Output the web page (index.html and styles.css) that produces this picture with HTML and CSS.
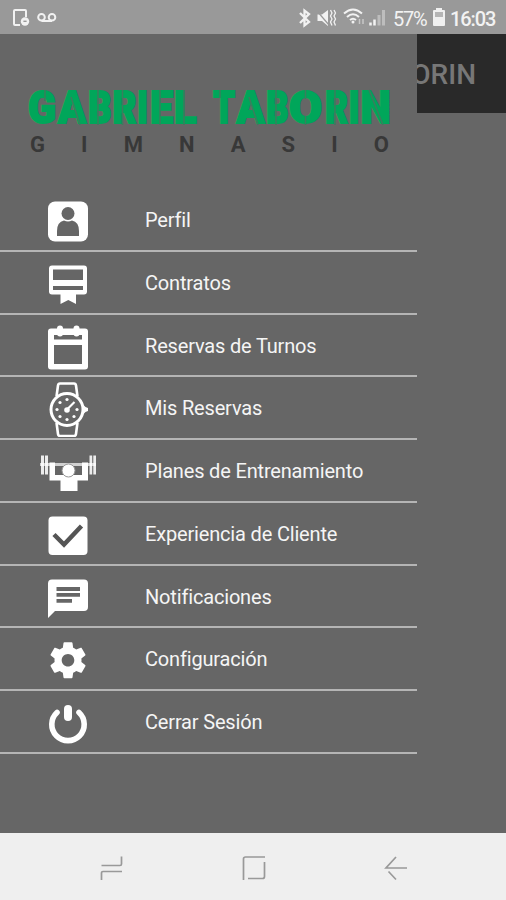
FILE: index.html
```html
<!DOCTYPE html>
<html lang="es">
<head>
    <meta charset="UTF-8">
    <meta name="viewport" content="width=device-width, initial-scale=1.0">
    <title>Gabriel Taborin Gimnasio</title>
    <link rel="stylesheet" href="styles.css">
</head>
<body>
    <header class="status-bar">
        <svg class="status-left" width="60" height="34" viewBox="0 0 60 34" fill="none" stroke="#f2f2f2" stroke-width="2">
            <path d="M20 25h-5a1 1 0 0 1-1-1V11a1 1 0 0 1 1-1h10a1 1 0 0 1 1 1v6"/>
            <circle cx="25" cy="21.5" r="4.2" fill="#f2f2f2" stroke="none"/>
            <path d="M23.4 21.3h3.2" stroke="#999" stroke-width="1.4"/>
            <circle cx="41.5" cy="17.3" r="3.300"/>
            <circle cx="52" cy="17.3" r="3.300"/>
            <path d="M41.5 21h10.5"/>
        </svg>
        <svg class="status-right" width="96" height="34" viewBox="294 0 96 34" fill="none" stroke="#f2f2f2" stroke-width="2">
            <path d="M300 13l9 9-4.500 3.500v-15l4.500 3.500-9 9" stroke-width="2.300"/>
            <path d="M317.500 14.500h4.500l6-4.500v16l-6-5h-4.500z" fill="#f2f2f2" stroke="none"/>
            <path d="M317 11l12 14" stroke="#999" stroke-width="1.200"/>
            <path d="M330.500 10l1.500 3-1.500 3 1.500 3-1.500 3 1.500 3.500M334 10l1.500 3-1.500 3 1.500 3-1.500 3 1.500 3.500" stroke-width="1.300"/>
            <path d="M344 13.500q9-8 18 0M347 17q6-5.500 12 0M350 20q3-2.500 6 0"/>
            <circle cx="353" cy="22" r="1.500" fill="#f2f2f2" stroke="none"/>
            <path d="M359.500 24v-5M363 19v5" stroke="#c8c8c8" stroke-width="1.500"/>
            <path d="M370.500 25.500v-3M374.500 25.500v-6" stroke-width="2.500"/>
            <path d="M379 25.500V15M383.500 25.500V10" stroke="#bdbdbd" stroke-width="3"/>
        </svg>
        <span class="battery-level">57%</span>
        <svg class="battery" width="12" height="34" viewBox="0 0 12 34">
            <path d="M3 8h6v2h2a1 1 0 0 1 1 1v14a1 1 0 0 1-1 1H1a1 1 0 0 1-1-1V11a1 1 0 0 1 1-1h2z" fill="#f0f0f0"/>
            <path d="M2 12h8v5H2z" fill="#b5b5b5"/>
        </svg>
        <span class="clock">16:03</span>
    </header>

    <main class="screen">
        <nav class="drawer">
            <div class="logo">
                <svg class="logo-name" width="417" height="50" viewBox="0 84 417 50">
                    <g class="logo-letters">
                        <text x="28" y="123" textLength="28" lengthAdjust="spacingAndGlyphs">G</text>
                        <text x="58" y="123" textLength="28" lengthAdjust="spacingAndGlyphs">A</text>
                        <text x="88" y="123" textLength="23.5" lengthAdjust="spacingAndGlyphs">B</text>
                        <text x="112.5" y="123" textLength="24" lengthAdjust="spacingAndGlyphs">R</text>
                        <text x="137" y="123" textLength="11" lengthAdjust="spacingAndGlyphs">I</text>
                        <text x="150" y="123" textLength="23" lengthAdjust="spacingAndGlyphs">E</text>
                        <text x="174" y="123" textLength="22.5" lengthAdjust="spacingAndGlyphs">L</text>
                        <text x="213" y="123" textLength="22" lengthAdjust="spacingAndGlyphs">T</text>
                        <text x="236.5" y="123" textLength="28" lengthAdjust="spacingAndGlyphs">A</text>
                        <text x="266" y="123" textLength="22.5" lengthAdjust="spacingAndGlyphs">B</text>
                        <text x="289" y="123" textLength="33" lengthAdjust="spacingAndGlyphs">O</text>
                        <text x="325" y="123" textLength="23" lengthAdjust="spacingAndGlyphs">R</text>
                        <text x="348.5" y="123" textLength="11" lengthAdjust="spacingAndGlyphs">I</text>
                        <text x="360.5" y="123" textLength="30" lengthAdjust="spacingAndGlyphs">N</text>
                    </g>
                    <!-- stencil cuts -->
                    <path class="logo-cuts" d="M45 90v11M71 97l9 28M98 90v35M122.500 90v35M160 90v35M184 90v35M220 98v-8M249 97l9 28M276 90v35M305.500 90v9M305.500 116v9M335 90v35M369 90l14 35"/>
                </svg>
                <div class="logo-sub">
                    <span>G</span><span>I</span><span>M</span><span>N</span><span>A</span><span>S</span><span>I</span><span>O</span>
                </div>
            </div>

            <ul class="menu">
                <li class="menu-item">
                    <svg class="icon" viewBox="0 0 60 60">
                        <rect x="10" y="12.500" width="40" height="40" rx="7"/>
                        <g class="hole">
                            <circle cx="30" cy="24.500" r="6.500"/>
                            <path d="M19 47v-5q0-9 7-10.500q4 2 8 0q7 1.500 7 10.500v5z"/>
                        </g>
                    </svg>
                    <span>Perfil</span>
                </li>
                <li class="menu-item">
                    <svg class="icon" viewBox="0 0 60 60">
                        <path fill-rule="evenodd" d="M14 13.500h32a3 3 0 0 1 3 3v23a3 3 0 0 1-3 3h-8v9.500l-7.700-4-7.800 4v-9.500H14a3 3 0 0 1-3-3v-23a3 3 0 0 1 3-3zM15 17.500v10.500h30V17.500zM15 34v4h30v-4z"/>
                    </svg>
                    <span>Contratos</span>
                </li>
                <li class="menu-item">
                    <svg class="icon" viewBox="0 0 60 60">
                        <path fill-rule="evenodd" d="M13 13.500h34a3 3 0 0 1 3 3v35a3 3 0 0 1-3 3H13a3 3 0 0 1-3-3v-35a3 3 0 0 1 3-3zM16 20v4.500h28V20zM16 30v19h28V30z"/>
                        <rect x="19" y="10.500" width="6" height="11" rx="3"/>
                        <rect x="35.500" y="10.500" width="6" height="11" rx="3"/>
                    </svg>
                    <span>Reservas de Turnos</span>
                </li>
                <li class="menu-item">
                    <svg class="icon" viewBox="0 0 60 60">
                        <g class="line">
                            <path d="M18.500 19.500l1.500-11q.3-2 2-2h14q1.700 0 2 2l1.500 11M18.500 45.500l1.500 11.500q.3 2 2 2h14q1.700 0 2-2l1.500-11.500" stroke-width="2.600"/>
                            <circle cx="29" cy="32.500" r="16" stroke-width="3"/>
                            <path d="M29 32.500l7.500-7.500" stroke-width="2.200"/>
                        </g>
                        <path d="M45 27.500l2.500 2.500 2.500 1v3l-2.500 1-2.500 2.500z"/>
                        <circle cx="29" cy="33" r="2.800"/>
                        <g>
                            <circle cx="29" cy="22.500" r="1.600"/>
                            <circle cx="22" cy="25.500" r="1.600"/>
                            <circle cx="19" cy="32.500" r="1.600"/>
                            <circle cx="22" cy="39.500" r="1.600"/>
                            <circle cx="29" cy="42.500" r="1.600"/>
                            <circle cx="36" cy="39.500" r="1.600"/>
                            <circle cx="39" cy="32.500" r="1.600"/>
                        </g>
                    </svg>
                    <span>Mis Reservas</span>
                </li>
                <li class="menu-item">
                    <svg class="icon" viewBox="0 0 60 60">
                        <path d="M3 15.500h3v19H3zM7 15.500h3v19H7zM51.500 15.500h2.700v19h-2.700zM55.300 15.500h2.700v19h-2.700z" opacity=".88"/>
                        <path d="M2 23h56v3H2z" opacity=".7"/>
                        <path d="M11.500 22.500H17V35h9q4.500 3 9 0h9V22.500h6V40.500H39.500V51H22.500V40.500h-11z"/>
                        <circle class="head" cx="30.500" cy="30.500" r="6.500"/>
                    </svg>
                    <span>Planes de Entrenamiento</span>
                </li>
                <li class="menu-item">
                    <svg class="icon" viewBox="0 0 60 60">
                        <rect x="10.500" y="13.500" width="39" height="38.500" rx="4"/>
                        <path class="cut" d="M16 31.500l10 10 17.500-18.500"/>
                    </svg>
                    <span>Experiencia de Cliente</span>
                </li>
                <li class="menu-item">
                    <svg class="icon" viewBox="0 0 60 60">
                        <path fill-rule="evenodd" d="M14 13.500h32a4 4 0 0 1 4 4V41a4 4 0 0 1-4 4H17l-7 7V17.500a4 4 0 0 1 4-4zM18.500 21v4h23.500v-4zM18.500 27v3.800h23.500V27zM18.500 33v3.800H34V33z"/>
                    </svg>
                    <span>Notificaciones</span>
                </li>
                <li class="menu-item">
                    <svg class="icon" viewBox="0 0 60 60">
                        <path transform="translate(8.400 10.700) scale(1.800)" d="M19.430 12.980c.04-.32.07-.64.07-.98s-.03-.66-.07-.98l2.110-1.650c.19-.15.24-.42.12-.64l-2-3.460c-.12-.22-.39-.3-.61-.22l-2.490 1c-.52-.4-1.080-.73-1.690-.98l-.38-2.650C14.460 2.180 14.250 2 14 2h-4c-.25 0-.46.18-.49.42l-.38 2.650c-.61.25-1.170.59-1.690.98l-2.490-1c-.23-.09-.49 0-.61.22l-2 3.460c-.13.22-.07.49.12.64l2.110 1.650c-.04.32-.07.65-.07.98s.03.66.07.98l-2.110 1.650c-.19.15-.24.42-.12.64l2 3.460c.12.22.39.3.61.22l2.490-1c.52.4 1.080.73 1.690.98l.38 2.650c.03.24.24.42.49.42h4c.25 0 .46-.18.49-.42l.38-2.650c.61-.25 1.170-.59 1.690-.98l2.490 1c.23.09.49 0 .61-.22l2-3.460c.12-.22.07-.49-.12-.64l-2.110-1.650zM12 15.500c-1.930 0-3.500-1.570-3.500-3.500s1.570-3.500 3.500-3.500 3.500 1.570 3.500 3.500-1.570 3.500-3.500 3.500z"/>
                    </svg>
                    <span>Configuración</span>
                </li>
                <li class="menu-item">
                    <svg class="icon" viewBox="0 0 60 60">
                        <path class="line" d="M19 21.500a16.200 16.200 0 1 0 22 0" stroke-width="5.600" stroke-linecap="round"/>
                        <rect x="26" y="14" width="8" height="16" rx="4"/>
                    </svg>
                    <span>Cerrar Sesión</span>
                </li>
            </ul>
        </nav>
        <div class="app-bar"><span>TABORIN</span></div>
    </main>

    <footer class="nav-bar">
        <svg width="24" height="26" viewBox="0 0 24 26">
            <path d="M1.500 10.500H20a1.500 1.500 0 0 0 1.500-1.500V1.500M1.500 25v-7A1.500 1.500 0 0 1 3 16.500h19"/>
        </svg>
        <svg width="26" height="26" viewBox="0 0 26 26">
            <path d="M2.500 25V4q0-2 2-2H24M23.500 7v14.500q0 2-2 2H7"/>
        </svg>
        <svg width="24" height="26" viewBox="0 0 24 26">
            <path d="M23 13H2L12 2M4.500 16.500l7.500 8"/>
        </svg>
    </footer>
</body>
</html>
```
FILE: styles.css
```css
* {
    box-sizing: border-box;
}
body {
    margin: 0;
    width: 506px;
    height: 900px;
    overflow: hidden;
    display: flex;
    flex-direction: column;
    font-family: Roboto, sans-serif;
    background-color: #666;
}
.status-bar {
    height: 34px;
    display: flex;
    align-items: center;
    background-color: #999;
    color: #f2f2f2;
    line-height: 34px;
    white-space: nowrap;
}
.status-right {
    margin-left: 234px;
}
.battery-level {
    width: 41px;
    margin-left: 3px;
    padding-top: 3px;
    font-size: 20px;
    letter-spacing: -1.2px;
}
.battery {
    margin-left: -1px;
}
.clock {
    margin-left: 5px;
    padding-top: 3px;
    font-size: 20px;
    letter-spacing: -1.1px;
    font-weight: 500;
}
.screen {
    height: 799px;
    display: flex;
    align-items: flex-start;
}
.drawer {
    width: 417px;
    height: 799px;
    flex-shrink: 0;
    background-color: #666;
}
.logo {
    height: 155px;
    padding-top: 50px;
}
.logo-name {
    display: block;
    overflow: visible;
}
.logo-letters {
    font-family: Roboto, sans-serif;
    font-size: 44px;
    font-weight: 900;
    fill: #00a65a;
    stroke: #00a65a;
    stroke-width: 2;
}
.logo-cuts {
    fill: none;
    stroke: #3a7e5e;
    stroke-width: 1.5;
}
.logo-sub {
    display: flex;
    justify-content: space-between;
    width: 359px;
    margin-left: 30px;
    font-size: 22px;
    font-weight: 700;
    line-height: 22px;
    color: #383838;
}
.menu {
    margin: 0;
    padding: 0;
    list-style: none;
}
.menu-item {
    display: flex;
    align-items: flex-start;
    height: 62.75px;
    padding-left: 38px;
    border-bottom: 2px solid #b5b5b5;
    color: #f5f5f5;
    font-size: 20px;
    line-height: 63px;
    letter-spacing: -0.17px;
}
.icon {
    width: 60px;
    height: 60px;
    margin-right: 47px;
    flex-shrink: 0;
    fill: #fff;
}
.hole {
    fill: #666;
}
.line {
    fill: none;
    stroke: #fff;
}
.cut {
    fill: none;
    stroke: #555;
    stroke-width: 4.5;
}
.head {
    stroke: #999;
    stroke-width: 1;
}
.app-bar {
    flex: 1;
    height: 79px;
    display: flex;
    align-items: center;
    justify-content: flex-end;
    padding-top: 1px;
    padding-right: 30px;
    overflow: hidden;
    background-color: #292929;
    color: #777;
    font-size: 28px;
    font-weight: 500;
}
.nav-bar {
    height: 67px;
    display: flex;
    justify-content: space-between;
    align-items: center;
    padding: 3px 98px 0 100px;
    background-color: #efefef;
}
.nav-bar svg {
    fill: none;
    stroke: #999;
    stroke-width: 1.7;
}
```
